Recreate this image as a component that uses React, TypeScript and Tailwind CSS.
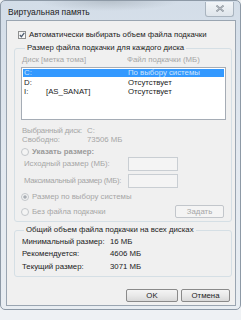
import React from "react";

const Radio = ({ checked }: { checked?: boolean }) => (
  <svg width="8" height="8" viewBox="0 0 8 8" className="shrink-0">
    <circle cx="4" cy="4" r="3.5" fill="#f4f4f4" stroke="#c2c6ca" strokeWidth="1" />
    {checked && <circle cx="4" cy="4" r="1.8" fill="#a8adb3" />}
  </svg>
);

export default function App() {
  const font = { fontFamily: '"Liberation Sans", "Noto Sans", sans-serif' };
  return (
    <div className="w-[241px] h-[320px] bg-[#eef1f4] overflow-hidden whitespace-nowrap" style={font}>
      <div className="w-[241px] h-[310px] border border-[#8d99a6] rounded-[5px] bg-gradient-to-b from-[#d3dde8] via-[#e3e9f0] to-[#e8edf2] flex flex-col">
        {/* title bar */}
        <div className="h-[19px] flex items-center justify-between shrink-0 rounded-t-[5px] bg-[radial-gradient(ellipse_70px_10px_at_45%_0%,#b8c2cc_0%,transparent_100%)]">
          <span className="ml-[7px] mt-[3px] text-[8.5px] text-[#1c1c1c] leading-none">Виртуальная память</span>
          <div className="w-[29px] h-[15px] mr-[6px] mb-[3px] border border-[#a9b4bf] border-t-0 rounded-b-[3px] bg-gradient-to-b from-[#f2f5f8] to-[#dfe5eb] flex items-center justify-center">
            <svg width="8" height="7" viewBox="0 0 8 7">
              <path d="M0.5 0.5 L7.5 6.5 M7.5 0.5 L0.5 6.5" stroke="#7f8891" strokeWidth="1.6" />
              <path d="M0.5 0.5 L7.5 6.5 M7.5 0.5 L0.5 6.5" stroke="#eef1f4" strokeWidth="0.5" />
            </svg>
          </div>
        </div>
        {/* content panel */}
        <div className="ml-[5px] w-[230px] h-[286px] bg-[#f0f0f0] border border-[#9aa5b1] flex flex-col text-[7.8px] leading-none text-[#222]">
          <div className="mt-[9px] h-[10px] pl-[11px] flex items-center gap-[3px]">
            <div className="w-[8px] h-[8px] border border-[#8e8f8f] bg-gradient-to-br from-[#f0f0f0] to-[#fdfdfd] flex items-center justify-center">
              <svg width="6" height="6" viewBox="0 0 6 6">
                <path d="M0.8 3 L2.4 4.7 L5.3 0.8" stroke="#4b5a6e" strokeWidth="1.2" fill="none" />
              </svg>
            </div>
            <span>Автоматически выбирать объем файла подкачки</span>
          </div>

          <fieldset className="mt-[3px] ml-[7px] mr-[3px] border border-[#d5dfe5] rounded-[3px] px-[6px] pb-[3px]">
            <legend className="ml-[4px] px-[2px] h-[10px] leading-[10px] text-[#1c1c1c]">Размер файла подкачки для каждого диска</legend>
            <div className="mt-[2px] h-[10px] flex items-center text-[#a6a6a6]">
              <span className="ml-[1px] w-[105px] shrink-0">Диск [метка тома]</span>
              <span>Файл подкачки (МБ)</span>
            </div>
            <div className="mt-[2px] h-[53px] mr-[-1px] bg-white border border-[#a5acb5] flex flex-col pt-[1px] px-[1px]">
              <div className="h-[8px] bg-[#3399ff] flex items-center text-[#cfe4fb]">
                <span className="ml-[1px] w-[104px] shrink-0">C:</span>
                <span>По выбору системы</span>
              </div>
              <div className="h-[9px] mt-[1px] flex items-center">
                <span className="ml-[1px] w-[104px] shrink-0">D:</span>
                <span>Отсутствует</span>
              </div>
              <div className="h-[9px] flex items-center">
                <span className="ml-[1px] w-[22px] shrink-0">I:</span>
                <span className="w-[82px] shrink-0">[AS_SANAT]</span>
                <span>Отсутствует</span>
              </div>
            </div>
            <div className="mt-[6px] h-[9px] flex items-center text-[#a6a6a6]">
              <span className="ml-[1px] w-[65px] shrink-0 tracking-[-0.2px]">Выбранный диск:</span>
              <span>C:</span>
            </div>
            <div className="h-[9px] flex items-center text-[#a6a6a6]">
              <span className="ml-[1px] w-[65px] shrink-0">Свободно:</span>
              <span>73506 МБ</span>
            </div>
            <div className="mt-[3px] h-[10px] flex items-center gap-[3px] text-[#9a9a9a] font-bold">
              <Radio />
              <span>Указать размер:</span>
            </div>
            <div className="h-[14px] flex items-center text-[#a6a6a6]">
              <span className="ml-[3px] w-[104px] shrink-0">Исходный размер (МБ):</span>
              <div className="w-[50px] h-[14px] border border-[#c9ced3] bg-[#f4f4f4]" />
            </div>
            <div className="mt-[3px] h-[14px] flex items-center text-[#a6a6a6]">
              <span className="ml-[3px] w-[104px] shrink-0 tracking-[-0.3px]">Максимальный размер (МБ):</span>
              <div className="w-[50px] h-[14px] border border-[#c9ced3] bg-[#f4f4f4]" />
            </div>
            <div className="mt-[4px] h-[10px] flex items-center gap-[3px] text-[#a6a6a6]">
              <Radio checked />
              <span>Размер по выбору системы</span>
            </div>
            <div className="mt-[3px] h-[13px] flex items-center text-[#a6a6a6]">
              <Radio />
              <span className="ml-[3px]">Без файла подкачки</span>
              <div className="ml-auto mr-[1px] w-[49px] h-[13px] border border-[#c2c6cb] rounded-[2px] bg-[#f4f4f4] flex items-center justify-center">
                Задать
              </div>
            </div>
          </fieldset>

          <fieldset className="mt-[3px] ml-[7px] mr-[3px] border border-[#d5dfe5] rounded-[3px] px-[6px] pb-[3px]">
            <legend className="ml-[3px] px-[2px] h-[10px] leading-[10px]">Общий объем файла подкачки на всех дисках</legend>
            <div className="mt-[1px] h-[12px] flex items-center">
              <span className="ml-[1px] w-[88px] shrink-0">Минимальный размер:</span>
              <span>16 МБ</span>
            </div>
            <div className="h-[12.5px] flex items-center">
              <span className="ml-[1px] w-[88px] shrink-0">Рекомендуется:</span>
              <span>4606 МБ</span>
            </div>
            <div className="h-[12.5px] flex items-center">
              <span className="ml-[1px] w-[88px] shrink-0">Текущий размер:</span>
              <span>3071 МБ</span>
            </div>
          </fieldset>

          <div className="mt-[12px] flex justify-end gap-[3px] mr-[5px]">
            <div className="w-[52px] h-[13px] border border-[#8a8a8a] rounded-[2px] bg-gradient-to-b from-[#f4f4f4] via-[#e9e9e9] to-[#d9d9d9] flex items-center justify-center">
              OK
            </div>
            <div className="w-[49px] h-[13px] border border-[#8a8a8a] rounded-[2px] bg-gradient-to-b from-[#f4f4f4] via-[#e9e9e9] to-[#d9d9d9] flex items-center justify-center">
              Отмена
            </div>
          </div>
        </div>
      </div>
    </div>
  );
}
